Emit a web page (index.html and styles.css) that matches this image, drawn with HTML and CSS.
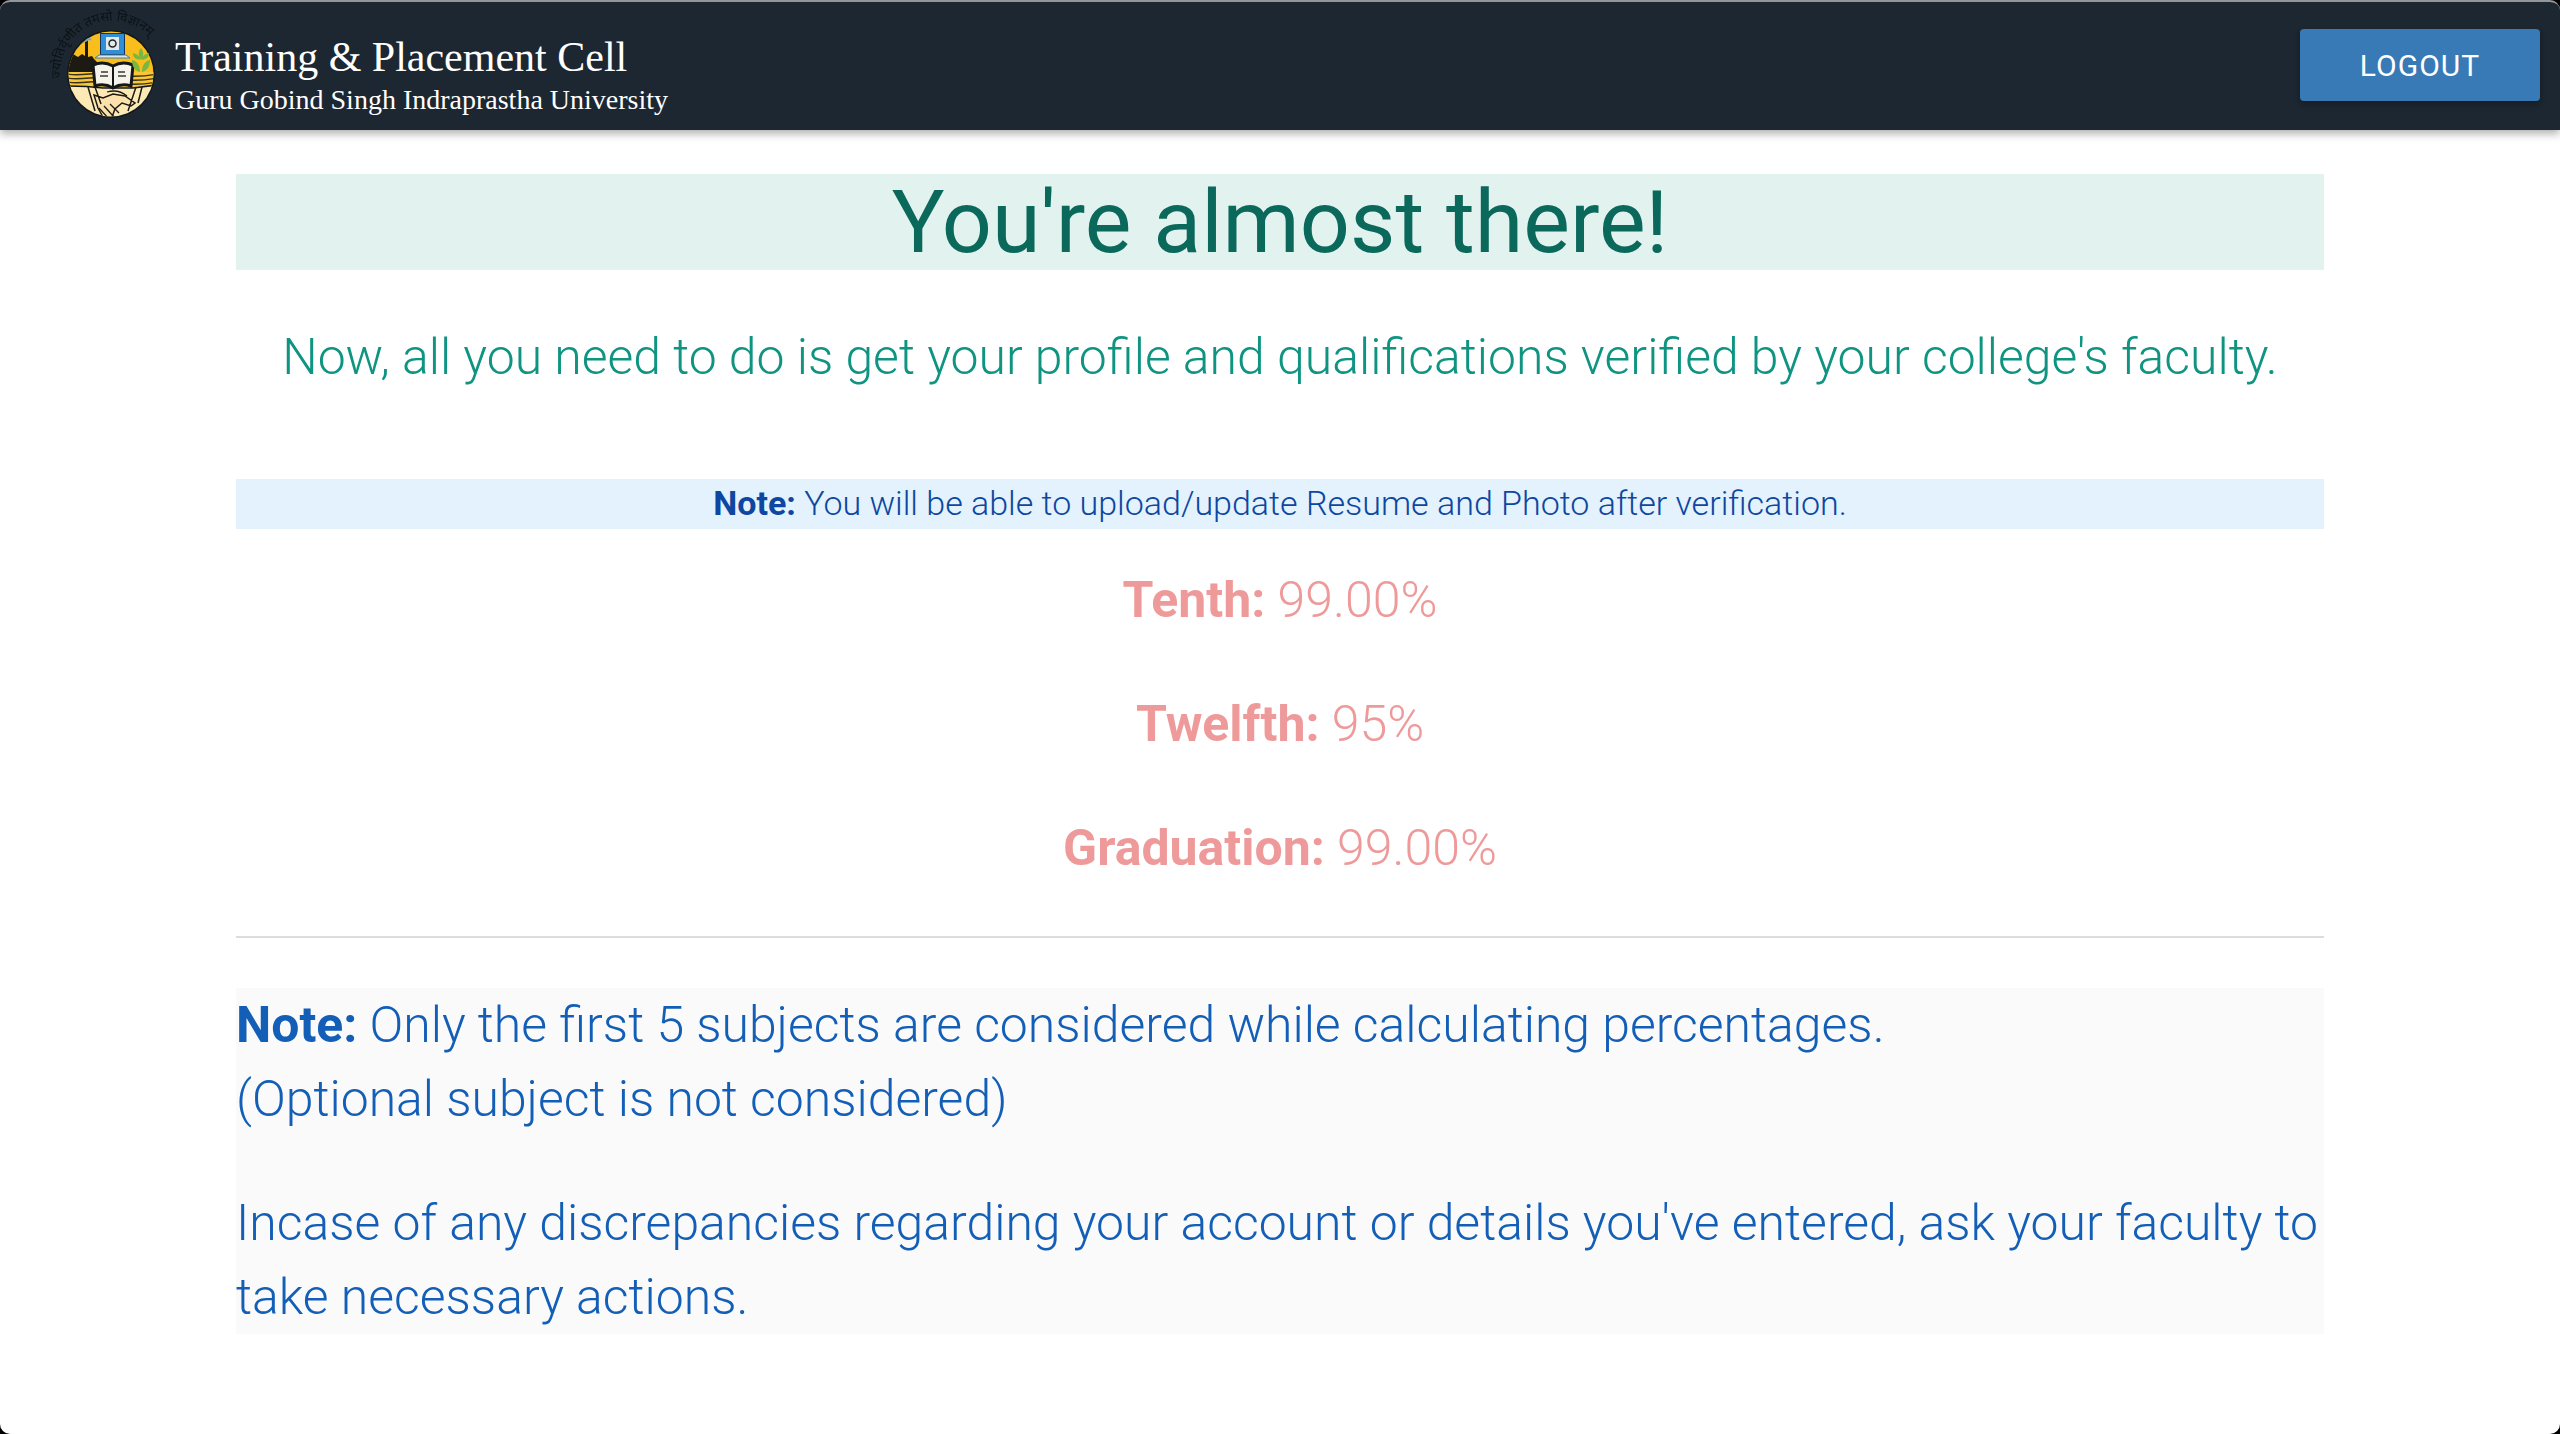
FILE: index.html
```html
<!DOCTYPE html>
<html lang="en">
<head>
<meta charset="utf-8">
<title>Training &amp; Placement Cell</title>
<link rel="stylesheet" href="styles.css">
</head>
<body>
<div class="window">
  <nav class="nav">
    <div class="brand">
      <svg class="logo" viewBox="0 0 130 120" aria-hidden="true">
        <defs><clipPath id="disc"><circle cx="70" cy="64" r="42.500"/></clipPath></defs>
        <path id="arc" d="M20 68 A50 50 0 0 1 122 56" fill="none"/>
        <text class="logo-script" font-size="13" fill="#0c1116"><textPath href="#arc">ज्योतिर्वृणीत तमसो विज्ञानम्</textPath></text>
        <circle cx="70" cy="64" r="44" fill="#14181b"/>
        <g clip-path="url(#disc)">
          <rect x="20" y="15" width="102" height="60" fill="#f9bd1c"/>
          <path d="M26 47l6-3 5 3 4-3 3 2v-2h3v3l4-1 2 3 3 3v16H26z" fill="#1c1a12"/>
          <rect x="44" y="30" width="3" height="16" fill="#1c1a12"/>
          <path d="M41 33c2-3 3-1 5-3s3-1 4 0" stroke="#6aa9c9" stroke-width="2" fill="none"/>
          <path d="M26 62h90v18H26z" fill="#f7c63c"/>
          <path d="M26 64c15 3 30-3 45 0s30 3 45 0M26 68c15 3 30-3 45 0s30 3 45 0M26 72c15 3 30-3 45 0s30 3 45 0" stroke="#3a3216" stroke-width="1.300" fill="none"/>
          <path d="M26 76c20 0 28 1 36 2h30c8-1 16-2 24-3v37H26z" fill="#fde9b5" stroke="#14181b" stroke-width="1.500"/>
          <path d="M53 85l9 3 10-4 12 2 10 7-4 3-9-3-7 6-3 8H62l-5-9zM47 77l7 24M54 77l6 17M95 77l-8 24M101 77l-4 16" fill="#fbe2ac" stroke="#1c1a12" stroke-width="1.500"/>
          <path d="M58 98l10 11M63 96l10 11M69 94l9 9M66 82c7-2 14-1 20 4" stroke="#1c1a12" stroke-width="1.300" fill="none"/>
        </g>
        <rect x="59.500" y="23.500" width="24" height="21" fill="#2f8ed6" stroke="#14345a" stroke-width="1"/>
        <rect x="65" y="27" width="13" height="13" fill="#e2e9ea"/>
        <circle cx="71.500" cy="33.500" r="3.500" fill="none" stroke="#222" stroke-width="1.500"/>
        <path d="M54 48l4-3h27l4 3z" fill="#d4e8f4" stroke="#3d7fb4" stroke-width="1"/>
        <path d="M52 55c7-3 13-3 20 1 7-4 13-4 20-1l-2 21c-6-2-13-1-18 2-5-3-12-4-18-2z" fill="#f6f4ea" stroke="#14181b" stroke-width="3"/>
        <path d="M72 56v21" stroke="#14181b" stroke-width="2"/>
        <path d="M60 62h7M59 66h8M77 62h7M77 66h8" stroke="#3a3a3a" stroke-width="1.500"/>
        <path d="M100 38c3 4 3 8 0 12-3-4-3-8 0-12zM99 62c-6-2-8-6-8-12 5 1 8 5 8 12zM101 62c6-2 8-6 8-12-5 1-8 5-8 12zM99 50c-5-1-7-3-7-7 4 1 7 3 7 7zM101 50c5-1 7-3 7-7-4 1-7 3-7 7z" fill="#78b740"/>
      </svg>
      <div class="brand-text">
        <div class="brand-title">Training &amp; Placement Cell</div>
        <div class="brand-sub">Guru Gobind Singh Indraprastha University</div>
      </div>
    </div>
    <a class="logout">LOGOUT</a>
  </nav>
  <main class="content">
    <h1 class="banner">You're almost there!</h1>
    <h2 class="lead">Now, all you need to do is get your profile and qualifications verified by your college's faculty.</h2>
    <p class="verify"><b>Note:</b> You will be able to upload/update Resume and Photo after verification.</p>
    <div class="scores">
      <p><b>Tenth:</b> 99.00%</p>
      <p><b>Twelfth:</b> 95%</p>
      <p><b>Graduation:</b> 99.00%</p>
    </div>
    <hr class="rule">
    <section class="notes">
      <p><b>Note:</b> Only the first 5 subjects are considered while calculating percentages.<br>(Optional subject is not considered)</p>
      <p>Incase of any discrepancies regarding your account or details you've entered, ask your faculty to take necessary actions.</p>
    </section>
  </main>
</div>
</body>
</html>
```
FILE: styles.css
```css
* { box-sizing: border-box; }
html { background: #000; height: 100%; }
body { margin: 0; height: 1434px; overflow: hidden; font-family: Roboto, sans-serif; }
.window { height: 1434px; background: #fff; border-radius: 10px; overflow: hidden; border-top: 2px solid #96969a; }
.nav { height: 128px; background: #1d2731; display: flex; align-items: center; justify-content: space-between; padding: 0 20px 0 41px; box-shadow: 0 4px 8px rgba(0,0,0,.3); position: relative; }
.brand { display: flex; align-items: center; }
.logo { width: 130px; height: 120px; flex: none; margin-top: 8px; overflow: visible; filter: blur(.5px); }
.logo-script { font-family: "Noto Sans", "DejaVu Sans", sans-serif; }
.brand-text { font-family: "Liberation Serif", serif; color: #fff; margin: 16px 0 0 4px; }
.brand-title { font-size: 42px; line-height: 52px; }
.brand-sub { font-size: 28px; line-height: 34px; }
.logout { width: 240px; height: 72px; margin-top: -2px; display: flex; align-items: center; justify-content: center; background: #377ab5; color: #fff; font-size: 30px; letter-spacing: 1px; border-radius: 4px; box-shadow: 0 3px 6px rgba(0,0,0,.3); }
.content { padding: 44px 236px 0; text-align: center; }
.banner { margin: 0; height: 96px; line-height: 95px; background: #e2f2ef; color: #0b695c; font-size: 88px; font-weight: 400; }
.lead { margin: 55px 0 0; color: #0f9482; font-size: 49.920px; line-height: 64px; font-weight: 300; height: 154px; }
.verify { margin: 0; height: 50px; line-height: 48px; background: #e3f2fd; color: #0d47a1; font-size: 34px; font-weight: 300; }
.scores { color: #ef9a9a; font-size: 50px; line-height: 60px; font-weight: 300; padding-top: 41px; }
.scores p { margin: 0 0 64px; }
.rule { margin: -6px 0 0; border: 0; border-top: 2px solid #ddd; }
.notes { margin-top: 50px; height: 346px; background: #fafafa; color: #135fb8; font-size: 49.920px; line-height: 74px; font-weight: 300; text-align: left; }
.notes p { margin: 0 0 50px; }
b { font-weight: 700; }
```
